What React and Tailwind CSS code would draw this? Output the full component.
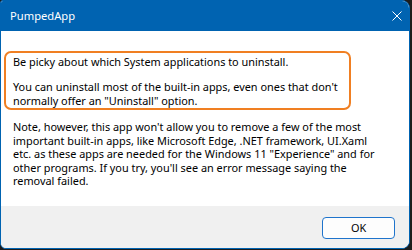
import React from 'react';

const font = { fontFamily: '"Segoe UI", "Noto Sans", sans-serif' };

export default function App() {
    const note = [
        "Note, however, this app won't allow you to remove a few of the most",
        'important built-in apps, like Microsoft Edge, .NET framework, UI.Xaml',
        'etc. as these apps are needed for the Windows 11 "Experience" and for',
        "other programs. If you try, you'll see an error message saying the",
        'removal failed.',
    ];

    return (
        <div className="w-[412px] h-[250px] bg-[#1c1c1c]" style={font}>
            <div className="w-[410px] h-[249px] flex flex-col overflow-hidden border border-[#0063b1] bg-white rounded-tl-[3px] rounded-tr-[8px] rounded-bl-[6px] rounded-br-[8px]">
                {/* title bar */}
                <div className="h-[30px] shrink-0 bg-[#0063b1] flex items-center justify-between pl-[9px] pr-[7px]">
                    <span className="text-white text-[11.2px] leading-none -mt-[1px]">PumpedApp</span>
                    <svg width="10" height="10" viewBox="0 0 10 10" className="-mt-[1px]">
                        <path d="M0.5 0.5 L9.5 9.5 M9.5 0.5 L0.5 9.5" stroke="white" strokeWidth="1" fill="none" />
                    </svg>
                </div>

                {/* body */}
                <div className="flex-1 flex flex-col text-[10.9px] text-black">
                    <div className="mt-[20px] ml-[3px] w-[347px] h-[59px] shrink-0 border-2 border-[#f07f22] rounded-[7px] pl-[7px] pt-[2px] leading-[14px] whitespace-nowrap">
                        <p>Be picky about which System applications to uninstall.</p>
                        <p className="mt-[11px]">You can uninstall most of the built-in apps, even ones that don't</p>
                        <p>normally offer an "Uninstall" option.</p>
                    </div>
                    <div className="mt-[10px] pl-[12px] leading-[13.5px] whitespace-nowrap">
                        {note.map((line, i) => (
                            <p key={i}>{line}</p>
                        ))}
                    </div>
                </div>

                {/* footer */}
                <div className="h-[42px] shrink-0 bg-[#f0f0f0] flex justify-end items-start pt-[11px] pr-[14px]">
                    <button className="w-[73px] h-[22px] rounded-[4px] border-[1.5px] border-[#1f74cc] bg-[#fdfdfd] text-[10.9px] text-black leading-none">
                        OK
                    </button>
                </div>
            </div>
        </div>
    );
}
